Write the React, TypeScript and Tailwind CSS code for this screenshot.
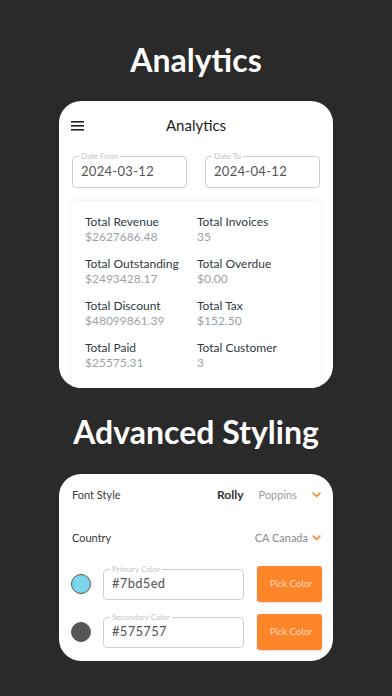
import React from "react"

const font = { fontFamily: "Lato, 'Open Sans', sans-serif" }

const stats = [
  ["Total Revenue", "$2627686.48", "Total Invoices", "35"],
  ["Total Outstanding", "$2493428.17", "Total Overdue", "$0.00"],
  ["Total Discount", "$48099861.39", "Total Tax", "$152.50"],
  ["Total Paid", "$25575.31", "Total Customer", "3"],
]

function Chevron() {
  return (
    <svg width="9" height="6" viewBox="0 0 9 6" className="shrink-0">
      <polyline points="1,1 4.5,4.5 8,1" fill="none" stroke="#ff8529" strokeWidth="1.6" strokeLinecap="round" strokeLinejoin="round" />
    </svg>
  )
}

function Field({ label, value, className }: { label: string; value: string; className: string }) {
  return (
    <div className={`relative rounded-[4px] border border-[#cfcfcf] ${className}`}>
      <span className="absolute -top-[6px] left-[6px] bg-white px-[2px] text-[8px] leading-[10px] text-[#c4c4c4]">{label}</span>
      <div className="flex h-full items-center pl-[8px] text-[13px] tracking-[0.3px] text-[#555]">{value}</div>
    </div>
  )
}

function ColorRow({ color, label, value }: { color: string; label: string; value: string }) {
  return (
    <div className="flex items-center">
      <div className="ml-[12px] h-[20px] w-[20px] rounded-full border border-[#555]" style={{ background: color }} />
      <Field label={label} value={value} className="ml-[12px] h-[31px] w-[141px]" />
      <button className="ml-[13px] flex h-[36px] w-[65px] items-center justify-center rounded-[3px] bg-[#ff8529] pl-[3px] text-[9.5px] text-[#ffd9bd] shadow-[0_1px_2px_rgba(0,0,0,0.15)]">
        Pick Color
      </button>
    </div>
  )
}

export default function App() {
  return (
    <div className="flex h-[696px] w-[392px] flex-col items-center overflow-hidden bg-[#2a2a2a]" style={font}>
      <h1 className="mt-[40px] h-[40px] text-[32px] font-bold leading-[40px] text-white">Analytics</h1>

      <div className="mt-[21px] h-[287px] w-[274px] overflow-hidden rounded-[22px] bg-white">
        <div className="relative flex h-[48px] items-center justify-center">
          <svg width="13" height="10" viewBox="0 0 13 10" className="absolute left-[12px] top-[20px]">
            <rect x="0" y="0" width="13" height="1.6" fill="#222" />
            <rect x="0" y="4" width="13" height="1.6" fill="#222" />
            <rect x="0" y="8" width="13" height="1.6" fill="#222" />
          </svg>
          <span className="text-[15px] text-[#222]">Analytics</span>
        </div>
        <div className="mt-[7px] flex justify-between px-[13px]">
          <Field label="Date From" value="2024-03-12" className="h-[32px] w-[115px]" />
          <Field label="Date To" value="2024-04-12" className="h-[32px] w-[115px]" />
        </div>
        <div className="mx-[12px] mt-[13px] h-[190px] rounded-[6px] bg-white px-[14px] pt-[13px] shadow-[0_0_6px_rgba(0,0,0,0.08)]">
          {stats.map((s) => (
            <div key={s[0]} className="grid h-[42px] grid-cols-[112px_1fr]">
              <div>
                <div className="text-[12px] leading-[15px] text-[#2e3a44]">{s[0]}</div>
                <div className="text-[12px] leading-[15px] text-[#9aa3a8]">{s[1]}</div>
              </div>
              <div>
                <div className="text-[12px] leading-[15px] text-[#2e3a44]">{s[2]}</div>
                <div className="text-[12px] leading-[15px] text-[#9aa3a8]">{s[3]}</div>
              </div>
            </div>
          ))}
        </div>
      </div>

      <h2 className="mt-[24px] h-[40px] text-[32px] font-bold leading-[40px] text-white">Advanced Styling</h2>

      <div className="mt-[22px] h-[187px] w-[274px] overflow-hidden rounded-[22px] bg-white">
        <div className="mt-[12px] flex h-[18px] items-center pl-[13px] pr-[12px]">
          <span className="text-[11px] text-[#3a3a3a]">Font Style</span>
          <span className="ml-auto text-[12px] font-bold text-[#333]">Rolly</span>
          <span className="ml-[15px] text-[11px] text-[#9a9a9a]">Poppins</span>
          <span className="ml-[15px]"><Chevron /></span>
        </div>
        <div className="mt-[25px] flex h-[18px] items-center pl-[13px] pr-[12px]">
          <span className="text-[11px] text-[#3a3a3a]">Country</span>
          <span className="ml-auto text-[11px] text-[#8a8a8a]">CA Canada</span>
          <span className="ml-[4px]"><Chevron /></span>
        </div>
        <div className="mt-[19px] flex flex-col gap-[12px]">
          <ColorRow color="#7bd5ed" label="Primary Color" value="#7bd5ed" />
          <ColorRow color="#575757" label="Secondary Color" value="#575757" />
        </div>
      </div>
    </div>
  )
}
